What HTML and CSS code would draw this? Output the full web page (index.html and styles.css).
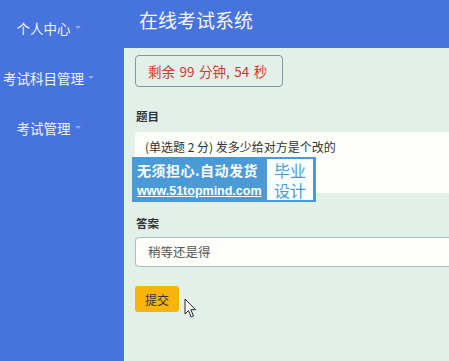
FILE: index.html
```html
<!DOCTYPE html>
<html lang="zh">
<head>
<meta charset="utf-8">
<title>在线考试系统</title>
<link rel="stylesheet" href="styles.css">
</head>
<body>
<div class="layout">
  <aside class="sidebar">
    <div class="nav-item"><span>个人中心</span><i class="caret"></i></div>
    <div class="nav-item"><span>考试科目管理</span><i class="caret"></i></div>
    <div class="nav-item"><span>考试管理</span><i class="caret"></i></div>
  </aside>
  <main class="main">
    <header class="topbar">在线考试系统</header>
    <section class="content">
      <div class="timer">剩余 99 分钟, 54 秒</div>
      <div class="label label-first">题目</div>
      <div class="question">(单选题 2 分) 发多少给对方是个改的</div>
      <div class="label">答案</div>
      <div class="answer">稍等还是得</div>
      <button class="submit">提交</button>
    </section>
  </main>
</div>
<div class="watermark">
  <div class="wm-left">
    <div class="wm-title">无须担心.自动发货</div>
    <div class="wm-url">www.51topmind.com</div>
  </div>
  <div class="wm-right"><span>毕业</span><span>设计</span></div>
</div>
<svg class="cursor" width="13" height="21" viewBox="0 0 13 21">
  <path d="M1 1 L1 16 L4.5 12.5 L7.2 19 L9.5 18 L6.8 11.7 L11.5 11.7 Z" fill="#fff" stroke="#222" stroke-width="1" stroke-linejoin="round"/>
</svg>
</body>
</html>
```
FILE: styles.css
```css
* { box-sizing: border-box; }
html, body {
  margin: 0;
  padding: 0;
  width: 449px;
  height: 361px;
  overflow: hidden;
  font-family: "Noto Sans CJK SC", "Noto Sans", sans-serif;
}
.layout {
  display: grid;
  grid-template-columns: 124px 1fr;
  height: 361px;
}
.sidebar {
  background: #4673dc;
  padding-top: 3px;
}
.nav-item {
  height: 50px;
  display: flex;
  align-items: center;
  justify-content: center;
  padding-right: 27px;
  color: #f2f5fc;
  font-size: 13.5px;
  white-space: nowrap;
}
.caret {
  display: inline-block;
  width: 0;
  height: 0;
  margin-left: 4px;
  margin-top: -2px;
  border-left: 3.5px solid transparent;
  border-right: 3.5px solid transparent;
  border-top: 3.5px solid #93a9e0;
}
.main {
  display: flex;
  flex-direction: column;
  min-width: 0;
}
.topbar {
  height: 48px;
  background: #4673dc;
  color: #f4f6fb;
  font-size: 19px;
  line-height: 40px;
  padding-left: 15px;
}
.content {
  flex: 1;
  background: #e3efe9;
  padding: 7px 0 0 11px;
  display: flex;
  flex-direction: column;
  align-items: stretch;
  overflow: hidden;
}
.timer {
  align-self: flex-start;
  height: 32px;
  width: 148px;
  border: 1px solid #7f97ab;
  border-radius: 4px;
  color: #cf3a2c;
  font-size: 13.5px;
  word-spacing: 1.5px;
  line-height: 30px;
  padding-left: 12px;
  white-space: nowrap;
}
.label {
  font-size: 11.5px;
  font-weight: bold;
  color: #333;
  line-height: 18px;
  margin-top: 21px;
  margin-left: 1px;
}
.label-first { margin-top: 20px; }
.question {
  margin-top: 7px;
  height: 61px;
  background: #fdfdfa;
  border-radius: 4px 0 0 4px;
  font-size: 12px;
  color: #333;
  line-height: 18px;
  padding: 6px 10px;
  white-space: nowrap;
}
.answer {
  margin-top: 5px;
  height: 30px;
  background: #fdfdfa;
  border: 1px solid #a9bccb;
  border-right: none;
  border-radius: 4px 0 0 4px;
  font-size: 12.5px;
  color: #555;
  line-height: 28px;
  padding-left: 12px;
}
.submit {
  align-self: flex-start;
  margin-top: 19px;
  width: 44px;
  height: 26px;
  background: #f8b40a;
  border: none;
  border-radius: 3px;
  color: #333;
  font-family: inherit;
  font-size: 12px;
  padding: 0;
}
.watermark {
  position: absolute;
  left: 132px;
  top: 157px;
  width: 184px;
  height: 45px;
  background: #4b9ad8;
  display: flex;
  padding: 2px 3px 2px 2px;
}
.wm-left {
  width: 133px;
  color: #fff;
  font-weight: bold;
  display: flex;
  flex-direction: column;
  justify-content: space-between;
  padding: 1px 0 1px 3px;
  white-space: nowrap;
}
.wm-title {
  font-size: 14px;
  line-height: 20px;
  letter-spacing: 0.5px;
}
.wm-url {
  font-size: 12.5px;
  line-height: 15px;
  text-decoration: underline;
  font-family: "Liberation Sans", Arial, sans-serif;
}
.wm-right {
  flex: 1;
  background: #fbfdff;
  color: #4b9ad8;
  font-size: 16px;
  line-height: 20px;
  display: flex;
  flex-direction: column;
  align-items: center;
  justify-content: center;
}
.cursor {
  position: absolute;
  left: 184px;
  top: 298px;
}
```
